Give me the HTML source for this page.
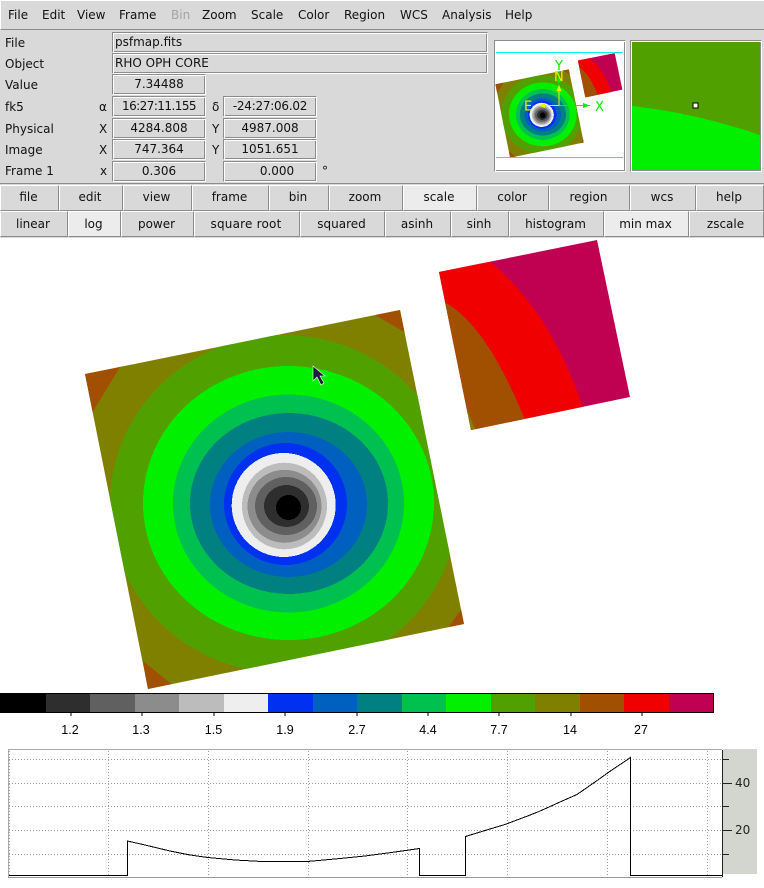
<!DOCTYPE html>
<html>
<head>
<meta charset="utf-8">
<style>
html,body{margin:0;padding:0;background:#fff;}
#p{position:relative;width:764px;height:888px;overflow:hidden;background:#fff;font-family:"DejaVu Sans",sans-serif;font-size:12px;color:#111;}
#p div{position:absolute;box-sizing:border-box;white-space:nowrap;}
.bar{background:#d9d9d9;}
.t{line-height:14px;height:14px;}
.g{background:#d9d9d9;border:1px solid;border-color:#8c8c8c #fff #fff #8c8c8c;box-shadow:inset 1px 1px 0 #fff,inset -1px -1px 0 #8c8c8c;text-align:center;line-height:19px;}
.b{background:#d9d9d9;border:1px solid;border-color:#fff #8c8c8c #8c8c8c #fff;text-align:center;padding-right:2px;}
.r1{top:185px;height:26px;line-height:23px;}
.r2{top:211px;height:26px;line-height:24px;}
.on{background:#ececec;}
.cb{font-family:"Liberation Sans",sans-serif;font-size:12.5px;top:723px;width:40px;text-align:center;line-height:14px;color:#000;}
svg{position:absolute;left:0;top:0;}
</style>
</head>
<body>
<div id="p">
<div class="bar" style="left:0;top:0;width:764px;height:238px;"></div>
<div style="left:0;top:0;width:764px;height:30px;border-top:1px solid #fff;border-left:1px solid #fff;border-bottom:1px solid #8c8c8c;"></div>
<div style="left:0;top:183px;width:764px;height:1px;background:#8c8c8c;"></div>
<div class="t" style="left:8px;top:8px;">File</div>
<div class="t" style="left:42px;top:8px;">Edit</div>
<div class="t" style="left:77px;top:8px;">View</div>
<div class="t" style="left:119px;top:8px;">Frame</div>
<div class="t" style="left:171px;top:8px;color:#a3a3a3;">Bin</div>
<div class="t" style="left:202px;top:8px;">Zoom</div>
<div class="t" style="left:251px;top:8px;">Scale</div>
<div class="t" style="left:298px;top:8px;">Color</div>
<div class="t" style="left:344px;top:8px;">Region</div>
<div class="t" style="left:400px;top:8px;">WCS</div>
<div class="t" style="left:442px;top:8px;">Analysis</div>
<div class="t" style="left:505px;top:8px;">Help</div>

<div class="t" style="left:5px;top:36px;">File</div>
<div class="t" style="left:5px;top:57px;">Object</div>
<div class="t" style="left:5px;top:78px;">Value</div>
<div class="t" style="left:5px;top:100px;">fk5</div>
<div class="t" style="left:5px;top:122px;">Physical</div>
<div class="t" style="left:5px;top:143px;">Image</div>
<div class="t" style="left:5px;top:164px;">Frame 1</div>

<div class="t" style="left:99px;top:100px;">α</div>
<div class="t" style="left:99px;top:122px;">X</div>
<div class="t" style="left:99px;top:143px;">X</div>
<div class="t" style="left:100px;top:164px;">x</div>
<div class="t" style="left:212px;top:100px;">δ</div>
<div class="t" style="left:212px;top:122px;">Y</div>
<div class="t" style="left:212px;top:143px;">Y</div>
<div class="t" style="left:322px;top:164px;">°</div>

<div class="g" style="left:112px;top:32px;width:376px;height:21px;text-align:left;padding-left:2px;">psfmap.fits</div>
<div class="g" style="left:112px;top:53px;width:376px;height:21px;text-align:left;padding-left:2px;">RHO OPH CORE</div>
<div class="g" style="left:112px;top:74px;width:94px;height:21px;">7.34488</div>
<div class="g" style="left:112px;top:96px;width:94px;height:21px;letter-spacing:-.55px;">16:27:11.155</div>
<div class="g" style="left:112px;top:118px;width:94px;height:21px;">4284.808</div>
<div class="g" style="left:112px;top:139px;width:94px;height:21px;">747.364</div>
<div class="g" style="left:112px;top:161px;width:94px;height:21px;line-height:18px;">0.306</div>
<div class="g" style="left:223px;top:96px;width:94px;height:21px;letter-spacing:-.25px;">-24:27:06.02</div>
<div class="g" style="left:223px;top:118px;width:94px;height:21px;">4987.008</div>
<div class="g" style="left:223px;top:139px;width:94px;height:21px;">1051.651</div>
<div class="g" style="left:223px;top:161px;width:94px;height:21px;padding-left:14px;line-height:18px;">0.000</div>

<div class="g" style="left:494px;top:40px;width:132px;height:132px;background:#fff;"></div>
<div class="g" style="left:630px;top:40px;width:132px;height:132px;"></div>

<div class="b r1" style="left:0;width:59px;">file</div>
<div class="b r1" style="left:59px;width:64px;">edit</div>
<div class="b r1" style="left:123px;width:69px;">view</div>
<div class="b r1" style="left:192px;width:77px;">frame</div>
<div class="b r1" style="left:269px;width:60px;">bin</div>
<div class="b r1" style="left:329px;width:74px;">zoom</div>
<div class="b r1 on" style="left:403px;width:74px;">scale</div>
<div class="b r1" style="left:477px;width:72px;">color</div>
<div class="b r1" style="left:549px;width:81px;">region</div>
<div class="b r1" style="left:630px;width:66px;">wcs</div>
<div class="b r1" style="left:696px;width:68px;">help</div>

<div class="b r2" style="left:0;width:68px;">linear</div>
<div class="b r2 on" style="left:68px;width:53px;">log</div>
<div class="b r2" style="left:121px;width:73px;">power</div>
<div class="b r2" style="left:194px;width:106px;letter-spacing:.2px;">square root</div>
<div class="b r2" style="left:300px;width:85px;">squared</div>
<div class="b r2" style="left:385px;width:66px;">asinh</div>
<div class="b r2" style="left:451px;width:58px;">sinh</div>
<div class="b r2" style="left:509px;width:95px;">histogram</div>
<div class="b r2 on" style="left:604px;width:85px;">min max</div>
<div class="b r2" style="left:689px;width:75px;">zscale</div>

<svg width="764" height="888" viewBox="0 0 764 888" shape-rendering="crispEdges">
<defs>
<clipPath id="q1"><polygon points="85,374 400,310 464,624 148,689"/></clipPath>
<clipPath id="q2"><polygon points="439,272 597,240 630,397 471,430"/></clipPath>
<g id="img">
<g clip-path="url(#q1)">
<rect x="80" y="300" width="400" height="400" fill="#808000"/>
<polygon points="85,374 120,367 92,413 80,400" fill="#a05000"/>
<polygon points="375,315 401,308 406,333" fill="#a05000"/>
<polygon points="448,628 462,608 470,630" fill="#a05000"/>
<polygon points="143,661 175,687 148,692" fill="#a05000"/>
<ellipse cx="284" cy="504" rx="174" ry="169" fill="#50a000"/>
<ellipse cx="288.5" cy="503" rx="145.5" ry="137" fill="#00f000"/>
<ellipse cx="288.5" cy="503.5" rx="115.5" ry="109" fill="#00c050"/>
<ellipse cx="289" cy="503.5" rx="99" ry="90.5" fill="#008080"/>
<ellipse cx="288.5" cy="504.5" rx="78.5" ry="72.5" fill="#0060c0"/>
<ellipse cx="285.5" cy="504" rx="61.5" ry="61" fill="#0030f0"/>
<ellipse cx="283.7" cy="505" rx="52" ry="52" fill="#eeeeee"/>
<ellipse cx="284.5" cy="506" rx="42.5" ry="43.3" fill="#bcbcbc"/>
<ellipse cx="284.5" cy="506.3" rx="37" ry="36.5" fill="#8c8c8c"/>
<ellipse cx="286" cy="506" rx="31" ry="29" fill="#606060"/>
<ellipse cx="286.5" cy="506" rx="22.5" ry="21" fill="#2e2e2e"/>
<ellipse cx="288.5" cy="507.5" rx="12.5" ry="12.5" fill="#000"/>
</g>
<g clip-path="url(#q2)">
<rect x="430" y="235" width="210" height="200" fill="#c00050"/>
<path d="M489 261Q550 309.5 583 408L530 440L430 440L430 250Z" fill="#f00000"/>
<path d="M444 302Q485.500 323 525 420L500 440L430 440L430 290Z" fill="#a05000"/>
<polygon points="466,407 475,429 470,432 460,410" fill="#808000"/>
</g>
</g>
</defs>

<use href="#img"/>

<!-- cursor -->
<path d="M313 366L313 381L317 377L321 385L324 383L320 376L325 376Z" fill="#1c1c3c" stroke="#fff" stroke-width=".6" shape-rendering="auto"/>

<!-- panner -->
<g>
<use href="#img" transform="translate(542.7 115.3) scale(.233) translate(-288 -507)"/>
<rect x="496" y="52" width="127" height="1" fill="#00f0f0"/>
<rect x="496" y="157" width="127" height="1" fill="#00f0f0"/>
<g shape-rendering="auto">
<path d="M559 105.500H590" stroke="#00f000" stroke-width="1"/>
<path d="M559 105.500V72" stroke="#00f000" stroke-width="1"/>
<path d="M590 105.500L583 103V108Z" fill="#00f000"/>
<path d="M559 75L556.500 82H561.500Z" fill="#00f000"/>
<path d="M559 105.500V88" stroke="#f0f000" stroke-width="1"/>
<path d="M559 105.500H540" stroke="#f0f000" stroke-width="1"/>
<path d="M559 85L556.500 91H561.500Z" fill="#f0f000"/>
<path d="M538 105.500L545 103V108Z" fill="#f0f000"/>
</g>
<text x="595" y="111" font-family="DejaVu Sans" font-size="13" fill="#00f000">X</text>
<text x="555" y="70" font-family="DejaVu Sans" font-size="13" fill="#00f000">Y</text>
<text x="554" y="81" font-family="DejaVu Sans" font-size="13" fill="#f0f000">N</text>
<text x="524" y="110.500" font-family="DejaVu Sans" font-size="13" fill="#f0f000">E</text>
</g>

<!-- magnifier -->
<rect x="632" y="42" width="128" height="128" fill="#50a000"/>
<path d="M632 106Q695 112.900 760 135V170H632Z" fill="#00f000"/>
<rect x="693" y="103" width="5" height="5" fill="#fff" stroke="#000" stroke-width="1"/>

<!-- colorbar -->
<g>
<rect x="0" y="693" width="46" height="20" fill="#000"/>
<rect x="46" y="693" width="44" height="20" fill="#2e2e2e"/>
<rect x="90" y="693" width="45" height="20" fill="#606060"/>
<rect x="135" y="693" width="44" height="20" fill="#8c8c8c"/>
<rect x="179" y="693" width="45" height="20" fill="#bcbcbc"/>
<rect x="224" y="693" width="44" height="20" fill="#eeeeee"/>
<rect x="268" y="693" width="45" height="20" fill="#0030f0"/>
<rect x="313" y="693" width="44" height="20" fill="#0060c0"/>
<rect x="357" y="693" width="45" height="20" fill="#008080"/>
<rect x="402" y="693" width="44" height="20" fill="#00c050"/>
<rect x="446" y="693" width="45" height="20" fill="#00f000"/>
<rect x="491" y="693" width="44" height="20" fill="#50a000"/>
<rect x="535" y="693" width="45" height="20" fill="#808000"/>
<rect x="580" y="693" width="44" height="20" fill="#a05000"/>
<rect x="624" y="693" width="45" height="20" fill="#f00000"/>
<rect x="669" y="693" width="44" height="20" fill="#c00050"/>
<rect x="0" y="693" width="714" height="1" fill="#000"/>
<rect x="0" y="712" width="714" height="1" fill="#000"/>
<rect x="713" y="693" width="1" height="20" fill="#000"/>
<path d="M71 713V716M142 713V716M214 713V716M285 713V716M357 713V716M428 713V716M499 713V716M571 713V716M642 713V716" stroke="#000" stroke-width="1"/>
</g>

<!-- plot -->
<g>
<rect x="723" y="749" width="34" height="125" fill="#d3d5cf"/>
<rect x="8" y="749" width="714" height="1" fill="#aaa"/>
<rect x="8" y="749" width="1" height="128" fill="#aaa"/>
<rect x="8" y="877" width="714" height="1" fill="#999"/>
<g stroke="#999" stroke-width="1" stroke-dasharray="1 2" fill="none">
<path d="M9.500 751V876M108.500 751V876M208.500 751V876M308.500 751V876M407.500 751V876M507.500 751V876M607.500 751V876M707.500 751V876"/>
<path d="M9 759.500H722M9 783.500H722M9 806.500H722M9 830.500H722M9 854.500H722"/>
</g>
<path d="M9 875.500H127.500V841L145 845L170 851L190 855L208 857.500L235 860L262 861.500H307L335 859L365 856L395 852L419.500 848.500V875.500H465.500V836.500L485 830.500L505 824.500L525 817L539 811.500L560 802L577 794.500L595 782L609 772L630.500 757.500V875.500H722" fill="none" stroke="#000" stroke-width="1"/>
<path d="M722.500 750V877" stroke="#222" stroke-width="1"/>
<path d="M723 759.500H729M723 783.500H732M723 806.500H729M723 830.500H732M723 854.500H729" stroke="#222" stroke-width="1"/>
</g>
</svg>

<div class="cb" style="left:50px;">1.2</div>
<div class="cb" style="left:121px;">1.3</div>
<div class="cb" style="left:193.500px;">1.5</div>
<div class="cb" style="left:265px;">1.9</div>
<div class="cb" style="left:337px;">2.7</div>
<div class="cb" style="left:408px;">4.4</div>
<div class="cb" style="left:479px;">7.7</div>
<div class="cb" style="left:550px;">14</div>
<div class="cb" style="left:621px;">27</div>

<div class="t" style="left:735px;top:776px;color:#222;">40</div>
<div class="t" style="left:735px;top:823px;color:#222;">20</div>
</div>
</body>
</html>
